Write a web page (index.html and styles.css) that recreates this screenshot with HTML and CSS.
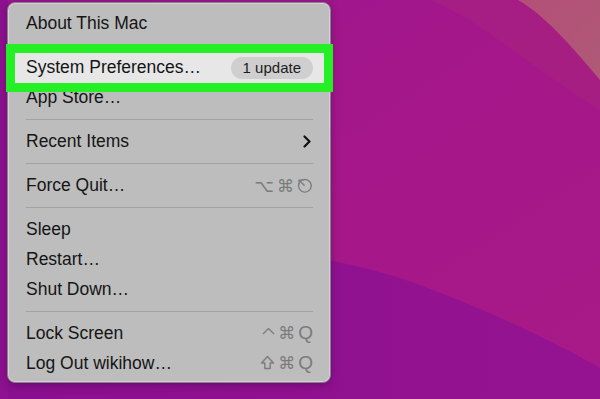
FILE: index.html
```html
<!DOCTYPE html>
<html>
<head>
<meta charset="utf-8">
<link rel="stylesheet" href="styles.css">
</head>
<body>
<div class="desktop">
  <svg class="wallpaper" width="600" height="399" viewBox="0 0 600 399">
    <defs>
      <linearGradient id="main" x1="0" y1="0" x2="1" y2="1">
        <stop offset="0" stop-color="#9c1590"/>
        <stop offset="0.5" stop-color="#a5178a"/>
        <stop offset="1" stop-color="#a81a86"/>
      </linearGradient>
      <linearGradient id="pink" x1="0" y1="0" x2="1" y2="1">
        <stop offset="0" stop-color="#b44f78"/>
        <stop offset="1" stop-color="#ae5a76"/>
      </linearGradient>
      <linearGradient id="dark" x1="0" y1="0" x2="1" y2="0">
        <stop offset="0" stop-color="#8a0f90"/>
        <stop offset="1" stop-color="#951390"/>
      </linearGradient>
    </defs>
    <rect width="600" height="399" fill="url(#main)"/>
    <path d="M430 0 C480 20 520 60 600 110 L600 0 Z" fill="#a8237f" opacity="0.6"/>
    <path d="M518 0 C545 15 575 50 600 80 L600 0 Z" fill="url(#pink)"/>
    <path d="M0 210 C120 240 300 240 420 285 C500 315 560 345 600 368 L600 399 L0 399 Z" fill="url(#dark)"/>
    <rect x="0" y="0" width="8" height="399" fill="#8e1190"/>
  </svg>
  <div class="menu">
    <div class="row"><span class="label">About This Mac</span></div>
    <div class="sep"></div>
    <div class="row highlighted"><span class="label">System Preferences…</span><span class="badge">1 update</span></div>
    <div class="row"><span class="label">App Store…</span></div>
    <div class="sep line"></div>
    <div class="row"><span class="label">Recent Items</span>
      <svg class="chevron" width="8" height="13" viewBox="0 0 8 13"><path d="M1.5 1.5 L6.5 6.5 L1.5 11.5" fill="none" stroke="#111" stroke-width="2.2" stroke-linecap="round" stroke-linejoin="round"/></svg>
    </div>
    <div class="sep line"></div>
    <div class="row"><span class="label">Force Quit…</span>
      <span class="keys"><span class="key">⌥</span><span class="key">⌘</span>
        <svg class="esc" width="16" height="16" viewBox="0 0 16 16"><path d="M4.4 2.6 A6.3 6.3 0 1 1 2.2 5.2" fill="none" stroke="#7d7d7d" stroke-width="1.4"/><path d="M2.2 2.2 L7.2 7.2" stroke="#7d7d7d" stroke-width="1.4" stroke-linecap="round"/><path d="M2.2 2.2 L2.2 5.6 M2.2 2.2 L5.6 2.2" stroke="#7d7d7d" stroke-width="1.4" stroke-linecap="round"/></svg>
      </span>
    </div>
    <div class="sep line"></div>
    <div class="row"><span class="label">Sleep</span></div>
    <div class="row"><span class="label">Restart…</span></div>
    <div class="row"><span class="label">Shut Down…</span></div>
    <div class="sep line"></div>
    <div class="row"><span class="label">Lock Screen</span>
      <span class="keys">
        <svg class="ctrl" width="13" height="16" viewBox="0 0 13 16"><path d="M1 9 L6.5 3.5 L12 9" fill="none" stroke="#7d7d7d" stroke-width="1.4" stroke-linejoin="round"/></svg>
        <span class="key">⌘</span><span class="key q">Q</span></span>
    </div>
    <div class="row"><span class="label">Log Out wikihow…</span>
      <span class="keys">
        <svg class="shift" width="15" height="16" viewBox="0 0 15 16"><path d="M7.5 1.5 L13.5 8 L10.2 8 L10.2 13.5 L4.8 13.5 L4.8 8 L1.5 8 Z" fill="none" stroke="#7d7d7d" stroke-width="1.4" stroke-linejoin="round"/></svg>
        <span class="key">⌘</span><span class="key q">Q</span></span>
    </div>
  </div>
</div>
</body>
</html>
```

FILE: styles.css
```css
html, body {
  margin: 0;
  padding: 0;
}
body {
  width: 600px;
  height: 399px;
  overflow: hidden;
  font-family: "Liberation Sans", Arial, sans-serif;
}
.desktop {
  position: relative;
  width: 600px;
  height: 399px;
  padding: 2px 0 0 7px;
  box-sizing: border-box;
}
.wallpaper {
  position: absolute;
  left: 0;
  top: 0;
}
.menu {
  position: relative;
  width: 324px;
  height: 381px;
  box-sizing: border-box;
  padding: 6px 0 4px 0;
  background: #bdbdbd;
  border-radius: 8px;
  border: 1px solid #8a7d8c;
  box-shadow: inset 0 0 0 1px #d2d2d2, 0 2px 8px rgba(40, 0, 50, 0.35);
  display: flex;
  flex-direction: column;
}
.row {
  height: 30px;
  display: flex;
  align-items: center;
  justify-content: space-between;
  padding: 0 17px 0 18px;
  font-size: 17.5px;
  color: #151515;
}
.row.highlighted {
  margin: 0 6px 0 7px;
  padding: 0 11px 0 11px;
  background: #e7e7e7;
  outline: 9px solid #25f025;
  position: relative;
}
.badge {
  font-size: 15px;
  color: #1c1c1c;
  background: #cfcfcf;
  border-radius: 11px;
  height: 22px;
  line-height: 22px;
  padding: 0 12px;
}
.sep {
  height: 14px;
  flex: none;
}
.sep.line {
  display: flex;
  align-items: center;
  padding: 0 17px 0 18px;
}
.sep.line::before {
  content: "";
  flex: 1;
  height: 1px;
  background: #a2a2a2;
}
.chevron {
  margin-right: 2px;
}
.keys {
  display: flex;
  align-items: center;
  gap: 3px;
  color: #7b7b7b;
}
.key {
  font-family: "DejaVu Sans", sans-serif;
  font-size: 17px;
  line-height: 18px;
}
.key.q {
  font-family: "Liberation Sans", sans-serif;
  font-size: 19px;
}
.esc, .ctrl, .shift {
  display: block;
}
```
